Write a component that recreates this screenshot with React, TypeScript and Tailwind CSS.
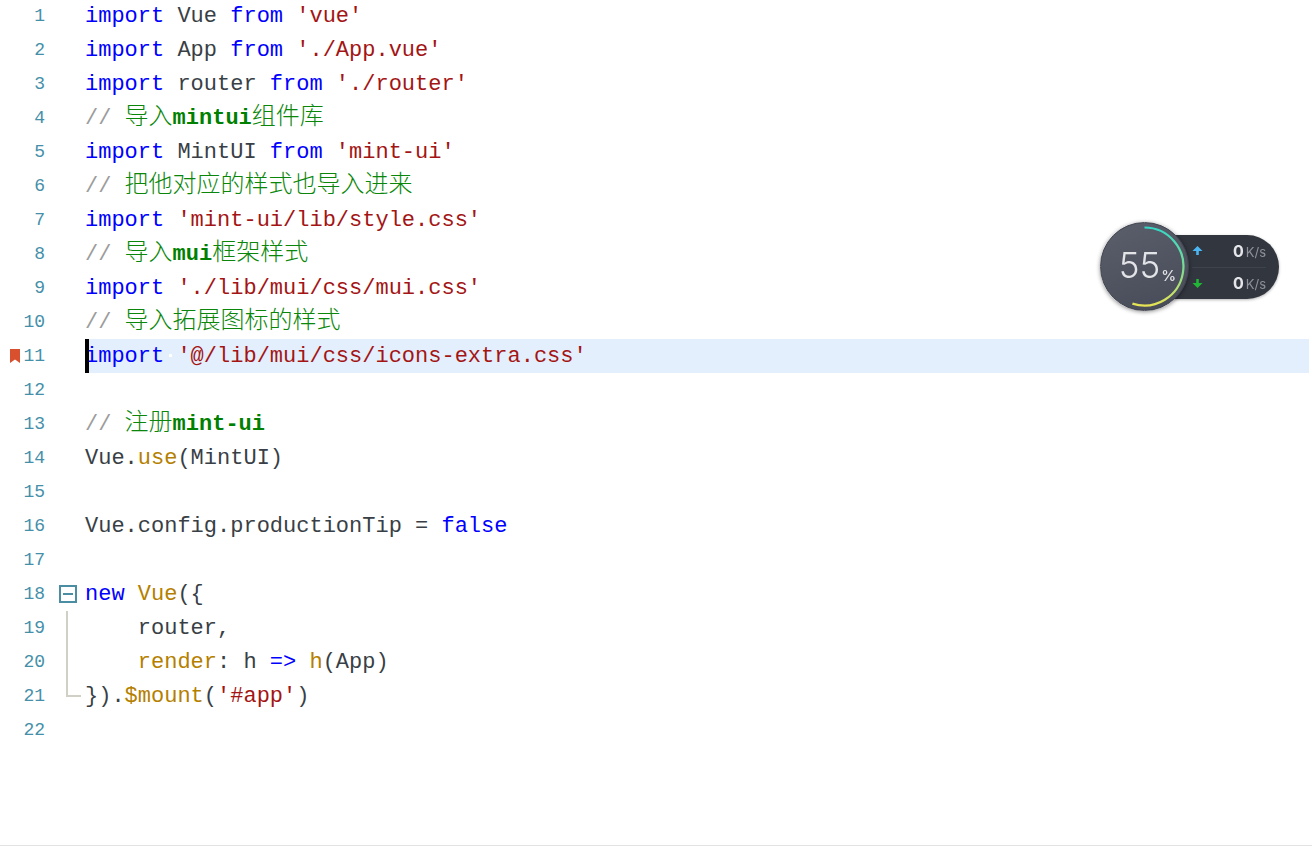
import React from 'react';

const K = 'text-[#0000ff]';
const S = 'text-[#a31515]';
const T = 'text-[#393f46]';
const F = 'text-[#b57f00]';
const G = 'text-[#9c9c9c]';
const C = 'text-[#0a870a] text-[24px] font-light';
const B = 'text-[#008000] font-bold';

type Seg = [string, string];
const lines: Seg[][] = [
  [['import', K], [' Vue ', T], ['from', K], [' ', T], ["'vue'", S]],
  [['import', K], [' App ', T], ['from', K], [' ', T], ["'./App.vue'", S]],
  [['import', K], [' router ', T], ['from', K], [' ', T], ["'./router'", S]],
  [['// ', G], ['导入', C], ['mintui', B], ['组件库', C]],
  [['import', K], [' MintUI ', T], ['from', K], [' ', T], ["'mint-ui'", S]],
  [['// ', G], ['把他对应的样式也导入进来', C]],
  [['import', K], [' ', T], ["'mint-ui/lib/style.css'", S]],
  [['// ', G], ['导入', C], ['mui', B], ['框架样式', C]],
  [['import', K], [' ', T], ["'./lib/mui/css/mui.css'", S]],
  [['// ', G], ['导入拓展图标的样式', C]],
  [['import', K], [' ', T], ["'@/lib/mui/css/icons-extra.css'", S]],
  [],
  [['// ', G], ['注册', C], ['mint-ui', B]],
  [['Vue.', T], ['use', F], ['(MintUI)', T]],
  [],
  [['Vue.config.productionTip = ', T], ['false', K]],
  [],
  [['new', K], [' ', T], ['Vue', F], ['({', T]],
  [['    router,', T]],
  [['    ', T], ['render', F], [': h ', T], ['=>', K], [' ', T], ['h', F], ['(App)', T]],
  [['}).', T], ['$mount', F], ['(', T], ["'#app'", S], [')', T]],
  [],
];

function Fold({ n }: { n: number }) {
  if (n === 18)
    return (
      <div className="flex h-[18px] w-[18px] items-center justify-center border-2 border-[#4b8da3] bg-white">
        <div className="h-[2px] w-[10px] bg-[#4b8da3]" />
      </div>
    );
  if (n === 19 || n === 20) return <div className="ml-[7px] h-full w-[2px] bg-[#d0d0c6]" />;
  if (n === 21)
    return (
      <div className="ml-[7px] h-[18px] w-[15px] self-start border-b-2 border-l-2 border-[#d0d0c6]" />
    );
  return null;
}

function Speed({ up }: { up: boolean }) {
  return (
    <div className={`flex flex-1 items-center justify-between ${up ? 'border-b border-[#3f434c]' : ''}`}>
      <svg width="11" height="11" viewBox="0 0 12 12">
        {up ? (
          <path d="M6 1 L11.5 6.5 H7.4 V11 H4.6 V6.5 H0.5 Z" fill="#4cb6f2" />
        ) : (
          <path d="M6 11 L11.5 5.5 H7.4 V1 H4.6 V5.5 H0.5 Z" fill="#22b636" />
        )}
      </svg>
      <div className="flex items-baseline font-['Inter',sans-serif]">
        <span className="text-[16px] font-bold text-[#e4e5e8]">0</span>
        <span className="ml-[2px] text-[13px] text-[#8f929a]">K/s</span>
      </div>
    </div>
  );
}

function Widget() {
  return (
    <div className="absolute left-[1098px] top-[220px] h-[94px] w-[184px] blur-[0.3px]">
      <div className="absolute left-[70px] top-[15px] flex h-[64px] w-[111px] flex-col rounded-r-[32px] bg-[#32363f] pl-[24px] pr-[13px] shadow-[0_1px_3px_rgba(0,0,0,0.3)]">
        <Speed up />
        <Speed up={false} />
      </div>
      <div className="absolute left-[2px] top-[2px] flex h-[89px] w-[89px] items-center justify-center rounded-full border border-[#41454f] bg-[linear-gradient(160deg,#5b5f6c,#474b57)] shadow-[0_1px_4px_rgba(0,0,0,0.45)]">
        <svg className="absolute inset-0" width="87" height="87" viewBox="0 0 87 87">
          <defs>
            <linearGradient id="ring" x1="0" y1="0" x2="0" y2="1">
              <stop offset="0" stopColor="#35d8c6" />
              <stop offset="0.55" stopColor="#7fdc90" />
              <stop offset="1" stopColor="#e6e354" />
            </linearGradient>
          </defs>
          <path d="M43.5 4.5 A39 39 0 1 1 31.4 80.6" fill="none" stroke="url(#ring)" strokeWidth="2.2" />
        </svg>
        <div className="relative mt-[-2px] flex items-baseline pl-[6px] font-['Inter',sans-serif] text-[#e3e4e8]">
          <span className="text-[35px] font-light leading-none">55</span>
          <span className="ml-[1px] translate-y-[3px] text-[15px] font-medium leading-none">%</span>
        </div>
      </div>
    </div>
  );
}

export default function App() {
  return (
    <div className="relative h-[846px] w-[1312px] overflow-hidden border-b border-[#e2e2e2] bg-white">
      <div className="-mt-px flex flex-col">
        {lines.map((segs, i) => {
          const n = i + 1;
          const active = n === 11;
          return (
            <div key={n} className="flex h-[34px] items-center">
              <div className="ml-[10px] flex w-[12px] shrink-0 justify-start">
                {active && (
                  <svg width="10" height="14" viewBox="0 0 10 14">
                    <path d="M0 0 H10 V14 L5 10.5 L0 14 Z" fill="#d9502e" />
                  </svg>
                )}
              </div>
              <div className="w-[23px] shrink-0 text-right font-['Liberation_Mono',monospace] text-[18px] text-[#458fa9]">
                {n}
              </div>
              <div className="ml-[14px] flex h-full w-[26px] shrink-0 items-center">
                <Fold n={n} />
              </div>
              <div
                className={`relative flex h-full w-[1224px] shrink-0 items-center whitespace-pre text-[22px] ${
                  active ? 'bg-[#e3effc]' : ''
                }`}
              >
                {active && <div className="absolute left-0 top-0 h-full w-[4px] bg-black" />}
                {active && <div className="absolute left-[84px] top-[15px] h-[3px] w-[3px] bg-white" />}
                {segs.map(([t, c], j) => (
                  <span key={j} className={`${c} font-['Liberation_Mono','Noto_Sans_CJK_SC',monospace]`}>
                    {t}
                  </span>
                ))}
              </div>
            </div>
          );
        })}
      </div>
      <Widget />
    </div>
  );
}
